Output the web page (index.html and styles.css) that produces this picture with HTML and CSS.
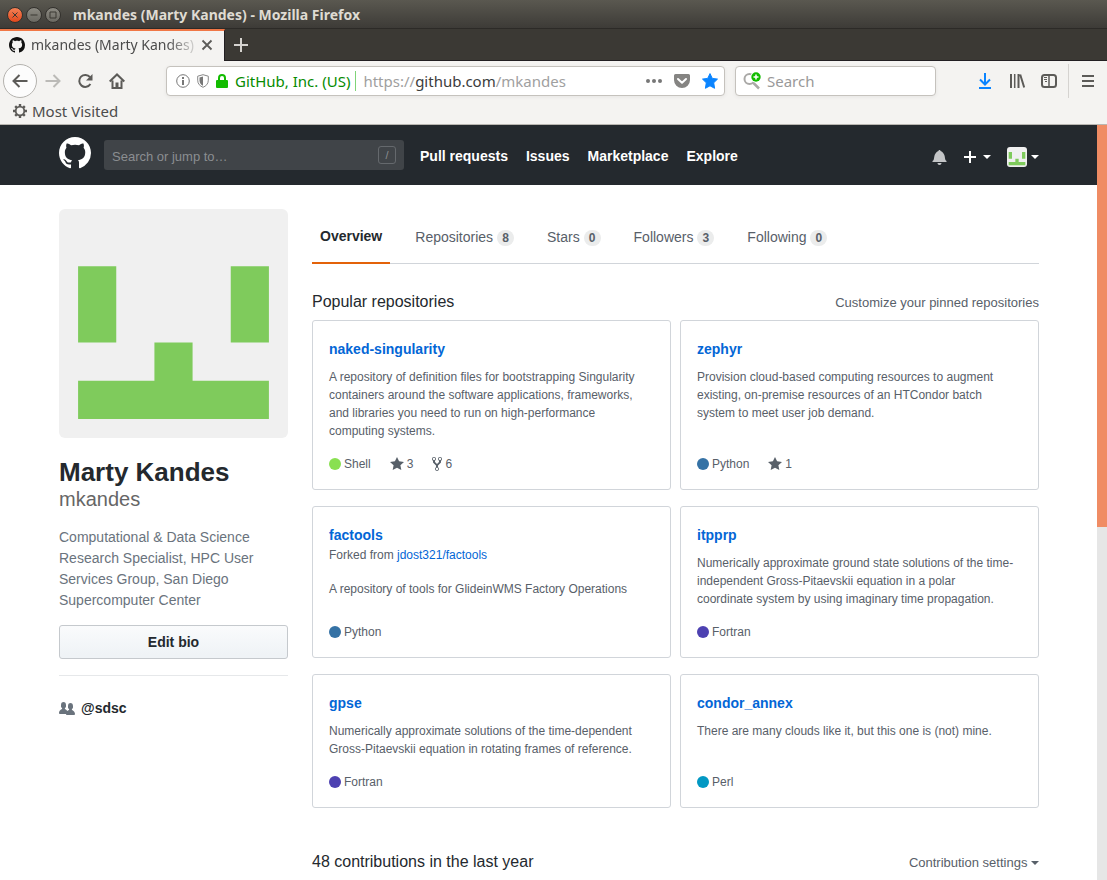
FILE: index.html
```html
<!DOCTYPE html>
<html lang="en">
<head>
<meta charset="utf-8">
<title>mkandes (Marty Kandes)</title>
<link rel="stylesheet" href="styles.css">
</head>
<body>
<svg class="sprite" aria-hidden="true">
  <symbol id="mark" viewBox="0 0 16 16"><path fill-rule="evenodd" d="M8 0C3.58 0 0 3.58 0 8c0 3.54 2.29 6.53 5.47 7.59.4.07.55-.17.55-.38 0-.19-.01-.82-.01-1.49-2.01.37-2.53-.49-2.69-.94-.09-.23-.48-.94-.82-1.13-.28-.15-.68-.52-.01-.53.63-.01 1.08.58 1.23.82.72 1.21 1.87.87 2.33.66.07-.52.28-.87.51-1.07-1.78-.2-3.64-.89-3.64-3.95 0-.87.31-1.59.82-2.15-.08-.2-.36-1.02.08-2.12 0 0 .67-.21 2.2.82.64-.18 1.32-.27 2-.27.68 0 1.36.09 2 .27 1.53-1.04 2.2-.82 2.2-.82.44 1.1.16 1.92.08 2.12.51.56.82 1.27.82 2.15 0 3.07-1.87 3.75-3.65 3.95.29.25.54.73.54 1.48 0 1.07-.01 1.93-.01 2.2 0 .21.15.46.55.38A8.013 8.013 0 0 0 16 8c0-4.42-3.58-8-8-8z"/></symbol>
  <symbol id="star" viewBox="0 0 14 16"><path d="M14 6l-4.9-.64L7 1 4.9 5.36 0 6l3.6 3.26L2.67 14 7 11.67 11.33 14l-.93-4.74z"/></symbol>
  <symbol id="identicon" viewBox="0 0 420 420"><path fill="#f0f0f0" d="M0 0h420v420H0z"/><path fill="#7fcb5c" d="M35 105h70v140H35zM315 105h70v140h-70zM175 245h70v70h140v70H35v-70h140z"/></symbol>
</svg>

<div class="titlebar">
  <button class="win win-close" aria-label="Close window"><svg width="8" height="8" viewBox="0 0 8 8"><path d="M1.500 1.500l5 5M6.500 1.500l-5 5"/></svg></button>
  <button class="win" aria-label="Minimize"><svg width="8" height="8" viewBox="0 0 8 8"><path d="M0.500 4h7"/></svg></button>
  <button class="win" aria-label="Maximize"><svg width="8" height="8" viewBox="0 0 8 8"><path d="M1 1h6v6H1z"/></svg></button>
  <span class="window-title">mkandes (Marty Kandes) - Mozilla Firefox</span>
</div>

<div class="tabbar">
  <div class="tab">
    <svg class="favicon" width="16" height="16"><use href="#mark"/></svg>
    <span class="tab-label">mkandes (Marty Kandes)</span>
    <button class="plain" aria-label="Close tab"><svg width="12" height="12" viewBox="0 0 12 12"><path d="M1.500 1.500l9 9M10.500 1.500l-9 9" stroke="#5c5b58" stroke-width="1.800"/></svg></button>
  </div>
  <button class="plain new-tab" aria-label="New tab"><svg width="14" height="14" viewBox="0 0 14 14"><path d="M7 0v14M0 7h14" stroke="#d5d3cf" stroke-width="2"/></svg></button>
</div>

<div class="toolbar">
  <div class="nav-buttons">
    <button class="plain back" aria-label="Back"><svg width="16" height="16" viewBox="0 0 16 16"><path d="M15.500 8H1.500M7.500 2L1.500 8l6 6" fill="none" stroke="#5c5b58" stroke-width="2"/></svg></button>
    <button class="plain" aria-label="Forward"><svg width="16" height="16" viewBox="0 0 16 16"><path d="M.5 8h14M8.500 2l6 6-6 6" fill="none" stroke="#bbbab7" stroke-width="2"/></svg></button>
    <button class="plain" aria-label="Reload"><svg width="16" height="16" viewBox="0 0 16 16"><path d="M13 4.200A6 6 0 1 0 13.400 11" fill="none" stroke="#5c5b58" stroke-width="2"/><path d="M15.500 1v6.500H9z" fill="#5c5b58"/></svg></button>
    <button class="plain" aria-label="Home"><svg width="16" height="16" viewBox="0 0 16 16"><path d="M.7 8.500L8 1.500l7.300 7M3.500 7.500V15h9V7.500" fill="none" stroke="#5c5b58" stroke-width="2"/><path d="M6.500 9.500h3V15h-3z" fill="#5c5b58"/></svg></button>
  </div>
  <div class="field urlbar">
    <svg width="14" height="14" viewBox="0 0 14 14"><circle cx="7" cy="7" r="6.300" fill="none" stroke="#777"/><path d="M6 3h2v2H6zM6 6h2v5H6z" fill="#777"/></svg>
    <svg width="12" height="14" viewBox="0 0 12 14"><path d="M6 .7l5.300 1.500v4C11.300 10 9 12 6 13.300 3 12 .7 10 .7 6.200v-4z" fill="none" stroke="#888"/><path d="M6 2.500L2.500 3.500V6.500C2.500 9 4 10.800 6 11.800z" fill="#777"/></svg>
    <svg width="12" height="14" viewBox="0 0 12 14"><path d="M3 7V4a3 3 0 0 1 6 0v3" fill="none" stroke="#12bc00" stroke-width="2"/><rect y="6" width="12" height="8" rx="1" fill="#12bc00"/></svg>
    <span class="identity">GitHub, Inc. (US)</span>
    <div class="url" role="textbox" contenteditable="true" spellcheck="false" aria-label="Address">https://<span class="domain">github.com</span>/mkandes</div>
    <svg width="16" height="4" viewBox="0 0 16 4" fill="#777"><circle cx="2" cy="2" r="2"/><circle cx="8" cy="2" r="2"/><circle cx="14" cy="2" r="2"/></svg>
    <svg class="pocket" width="16" height="14" viewBox="0 0 16 14"><path d="M1.500 0h13A1.500 1.500 0 0 1 16 1.500V6A8 8 0 0 1 0 6V1.500A1.500 1.500 0 0 1 1.500 0z" fill="#858482"/><path d="M4 5l4 3.700L12 5" fill="none" stroke="#fff" stroke-width="2" stroke-linecap="round" stroke-linejoin="round"/></svg>
    <svg width="16" height="16" viewBox="0 0 16 16"><path d="M8 .6l2.300 4.800 5.200.7-3.800 3.700.9 5.500L8 12.800l-4.600 2.500.9-5.500L.5 6.100l5.200-.7z" fill="#0a84ff" stroke="#0a84ff" stroke-linejoin="round"/></svg>
  </div>
  <label class="field searchbar">
    <svg width="18" height="18" viewBox="0 0 18 18"><circle cx="6.500" cy="7" r="5" fill="none" stroke="#aaa9a7" stroke-width="2"/><path d="M10 10.500l6 6" stroke="#aaa9a7" stroke-width="2.500"/><circle cx="13" cy="5" r="5.500" fill="#fff"/><circle cx="13" cy="5" r="4.700" fill="#12bc00"/><path d="M13 2.500v5M10.500 5h5" stroke="#fff" stroke-width="1.500"/></svg>
    <input type="text" placeholder="Search" aria-label="Search the web">
  </label>
  <div class="tool-buttons">
    <button class="plain" aria-label="Downloads"><svg width="16" height="16" viewBox="0 0 16 16"><path d="M8 0v11M3 6.500l5 5 5-5M2 15h12" fill="none" stroke="#0a84ff" stroke-width="2"/></svg></button>
    <button class="plain" aria-label="Library"><svg width="16" height="16" viewBox="0 0 16 16"><path d="M2 1v14M9.500 1v14M11.200 1.500l4 13" fill="none" stroke="#5c5b58" stroke-width="2"/><path d="M5.700 1v14" stroke="#5c5b58" stroke-width="1.500"/></svg></button>
    <button class="plain" aria-label="Sidebars"><svg width="16" height="16" viewBox="0 0 16 16"><rect x="1" y="2" width="14" height="12" rx="2.500" fill="none" stroke="#5c5b58" stroke-width="2"/><path d="M8 2v12" stroke="#5c5b58" stroke-width="1.500"/><path d="M3 4.500h3M3 6.500h3M4 8.500h2" stroke="#5c5b58"/></svg></button>
    <span class="separator"></span>
    <button class="plain" aria-label="Open menu"><svg width="12" height="12" viewBox="0 0 12 12"><path d="M0 1h12M0 6h12M0 11h12" stroke="#5c5b58" stroke-width="2"/></svg></button>
  </div>
</div>

<div class="bookmarks">
  <button class="plain bookmark"><svg width="16" height="16" viewBox="0 0 16 16" fill="none" stroke="#5c5b58"><circle cx="8" cy="8" r="4.300" stroke-width="1.800"/><path d="M8 1v2.500M8 12.500V15M1 8h2.500M12.500 8H15M3.200 3.200L5 5M11 11l1.800 1.800M12.800 3.200L11 5M5 11l-1.800 1.800" stroke-width="2.400"/></svg>Most Visited</button>
</div>

<div class="viewport">
  <div class="page">
    <header class="header">
      <div class="container header-row">
        <a href="#" class="logo" aria-label="Homepage"><svg width="32" height="32"><use href="#mark"/></svg></a>
        <label class="jump"><input type="text" placeholder="Search or jump to…" aria-label="Search or jump to"><kbd>/</kbd></label>
        <nav class="main-nav">
          <a href="#">Pull requests</a><a href="#">Issues</a><a href="#">Marketplace</a><a href="#">Explore</a>
        </nav>
        <div class="user-nav">
          <button class="plain" aria-label="Notifications"><svg width="15" height="16" viewBox="0 0 14 16" fill="#c3c5c7"><path d="M14 12v1H0v-1l.73-.58c.77-.77.81-2.550 1.190-4.420C2.690 3.230 6 2 6 2c0-.55.45-1 1-1s1 .45 1 1c0 0 3.390 1.230 4.160 5 .38 1.880.42 3.660 1.190 4.420l.66.580H14zm-7 4c1.110 0 2-.89 2-2H5c0 1.110.89 2 2 2z"/></svg></button>
          <button class="plain menu" aria-label="Create new"><svg width="14" height="14" viewBox="0 0 14 14"><path d="M7 1v12M1 7h12" stroke="#fff" stroke-width="2"/></svg><span class="caret"></span></button>
          <button class="plain menu profile-menu" aria-label="View profile"><svg class="avatar-small" width="20" height="20"><use href="#identicon"/></svg><span class="caret"></span></button>
        </div>
      </div>
    </header>

    <main class="container profile">
      <aside class="sidebar">
        <svg class="avatar" viewBox="0 0 420 420" role="img" aria-label="mkandes"><use href="#identicon"/></svg>
        <h1><span class="fullname">Marty Kandes</span><span class="login">mkandes</span></h1>
        <p class="bio">Computational &amp; Data Science Research Specialist, HPC User Services Group, San Diego Supercomputer Center</p>
        <button class="edit">Edit bio</button>
        <div class="org">
          <svg width="16" height="16" viewBox="0 0 16 16" fill="#6a737d"><path d="M16 12.999c0 .439-.45 1-1 1H7.995c-.539 0-.994-.447-.995-.999H1c-.54 0-1-.561-1-1 0-2.634 3-4 3-4s.229-.409 0-1c-.841-.621-1.058-.59-1-3 .058-2.419 1.367-3 2.500-3s2.442.58 2.500 3c.058 2.410-.159 2.379-1 3-.229.59 0 1 0 1s1.549.711 2.420 2.088C9.196 9.369 10 8.999 10 8.999s.229-.409 0-1c-.841-.62-1.058-.59-1-3 .058-2.419 1.367-3 2.500-3s2.437.581 2.495 3c.059 2.410-.158 2.380-1 3-.229.59 0 1 0 1s3.005 1.366 3.005 4"/></svg>
          <a href="#">@sdsc</a>
        </div>
      </aside>

      <div class="content">
        <nav class="tabs">
          <a href="#" class="selected">Overview</a>
          <a href="#">Repositories <span class="count">8</span></a>
          <a href="#">Stars <span class="count">0</span></a>
          <a href="#">Followers <span class="count">3</span></a>
          <a href="#">Following <span class="count">0</span></a>
        </nav>

        <div class="section-head">
          <h2>Popular repositories</h2>
          <button class="plain quiet">Customize your pinned repositories</button>
        </div>

        <div class="repos">
          <article class="repo">
            <h3><a href="#">naked-singularity</a></h3>
            <p class="desc">A repository of definition files for bootstrapping Singularity containers around the software applications, frameworks, and libraries you need to run on high-performance<br>computing systems.</p>
            <div class="meta"><span class="lang"><i class="dot shell"></i>Shell</span><a href="#" class="stat"><svg width="14" height="16"><use href="#star"/></svg>3</a><a href="#" class="stat"><svg width="10" height="16" viewBox="0 0 10 16"><path d="M8 1a1.993 1.993 0 0 0-1 3.720V6L5 8 3 6V4.720A1.993 1.993 0 0 0 2 1a1.993 1.993 0 0 0-1 3.720V6.500l3 3v1.780A1.993 1.993 0 0 0 5 15a1.993 1.993 0 0 0 1-3.720V9.500l3-3V4.720A1.993 1.993 0 0 0 8 1zM2 4.200C1.340 4.200.8 3.650.8 3c0-.65.55-1.200 1.200-1.200.65 0 1.200.55 1.200 1.200 0 .65-.55 1.200-1.200 1.200zm3 10c-.66 0-1.200-.55-1.200-1.200 0-.65.55-1.200 1.200-1.200.65 0 1.200.55 1.200 1.200 0 .65-.55 1.200-1.200 1.200zm3-10c-.66 0-1.200-.55-1.200-1.200 0-.65.55-1.200 1.200-1.200.65 0 1.200.55 1.200 1.200 0 .65-.55 1.200-1.200 1.200z"/></svg>6</a></div>
          </article>
          <article class="repo">
            <h3><a href="#">zephyr</a></h3>
            <p class="desc">Provision cloud-based computing resources to augment existing, on-premise resources of an HTCondor batch system to meet user job demand.</p>
            <div class="meta"><span class="lang"><i class="dot python"></i>Python</span><a href="#" class="stat"><svg width="14" height="16"><use href="#star"/></svg>1</a></div>
          </article>
          <article class="repo">
            <h3><a href="#">factools</a></h3>
            <p class="fork">Forked from <a href="#">jdost321/factools</a></p>
            <p class="desc">A repository of tools for GlideinWMS Factory Operations</p>
            <div class="meta"><span class="lang"><i class="dot python"></i>Python</span></div>
          </article>
          <article class="repo">
            <h3><a href="#">itpprp</a></h3>
            <p class="desc">Numerically approximate ground state solutions of the time-independent Gross-Pitaevskii equation in a polar<br>coordinate system by using imaginary time propagation.</p>
            <div class="meta"><span class="lang"><i class="dot fortran"></i>Fortran</span></div>
          </article>
          <article class="repo">
            <h3><a href="#">gpse</a></h3>
            <p class="desc">Numerically approximate solutions of the time-dependent Gross-Pitaevskii equation in rotating frames of reference.</p>
            <div class="meta"><span class="lang"><i class="dot fortran"></i>Fortran</span></div>
          </article>
          <article class="repo">
            <h3><a href="#">condor_annex</a></h3>
            <p class="desc">There are many clouds like it, but this one is (not) mine.</p>
            <div class="meta"><span class="lang"><i class="dot perl"></i>Perl</span></div>
          </article>
        </div>

        <div class="section-head contributions">
          <h2>48 contributions in the last year</h2>
          <button class="plain quiet">Contribution settings <span class="caret"></span></button>
        </div>
      </div>
    </main>
  </div>
  <div class="scrollbar"><div class="thumb"></div></div>
</div>
</body>
</html>
```
FILE: styles.css
```css
* { box-sizing: border-box; }
html, body { height: 100%; }
body {
  margin: 0;
  display: flex;
  flex-direction: column;
  overflow: hidden;
  background: #fff;
  color: #24292e;
  font: 14px/21px "Liberation Sans", Arial, sans-serif;
}
h1, h2, h3, p { margin: 0; }
a { color: inherit; text-decoration: none; }
svg { display: block; flex: none; }
input, button { font: inherit; }
.sprite { position: absolute; width: 0; height: 0; }
.plain { padding: 0; border: 0; background: none; color: inherit; }

/* Window frame */
.titlebar, .tabbar, .toolbar, .bookmarks { flex: none; font: 15px/20px "Noto Sans", sans-serif; }
.titlebar {
  display: flex;
  align-items: center;
  gap: 3px;
  height: 29px;
  padding: 1px 0 0 7px;
  background: linear-gradient(#5a5850, #3d3b37);
  border-bottom: 1px solid #2c2a27;
}
.win {
  display: flex;
  align-items: center;
  justify-content: center;
  width: 16px;
  height: 16px;
  padding: 0;
  border: 1px solid #33312d;
  border-radius: 50%;
  background: linear-gradient(#8c8a82, #6b6962);
}
.win svg { fill: none; stroke: #3a3833; stroke-width: 1; }
.win-close { background: linear-gradient(#f58256, #e2481c); }
.window-title { padding-left: 9px; color: #dfdbd2; font-size: 14px; font-weight: 700; }
.tabbar { display: flex; height: 32px; background: #3b3934; box-shadow: inset 0 -1px #221f22; }
.tab {
  display: flex;
  align-items: center;
  width: 225px;
  padding: 0 11px 2px 9px;
  background: #f4f3f1;
  border-top: 2px solid #f07746;
  border-right: 1px solid #221f22;
  color: #4c4c4c;
  font-size: 14px;
}
.favicon { margin-right: 6px; color: #111; }
.tab-label {
  flex: 1;
  white-space: nowrap;
  -webkit-mask-image: linear-gradient(90deg, #000 80%, transparent);
  mask-image: linear-gradient(90deg, #000 80%, transparent);
}
.new-tab { padding: 0 9px; }
.toolbar { display: flex; align-items: center; height: 40px; padding: 0 13px 0 3px; background: #f4f3f1; color: #4c4c4c; }
.nav-buttons { display: flex; align-items: center; gap: 16px; margin-right: 41px; }
.back {
  display: flex;
  align-items: center;
  justify-content: center;
  width: 34px;
  height: 34px;
  margin-right: -8px;
  border: 1px solid #b4b2ae;
  border-radius: 50%;
  background: #fcfcfc;
}
.field {
  display: flex;
  align-items: center;
  height: 30px;
  border: 1px solid #c5c2bd;
  border-radius: 4px;
  background: #fff;
  box-shadow: 0 1px 4px rgba(0, 0, 0, .06);
}
.urlbar { flex: 1; gap: 7px; min-width: 0; padding: 0 6px 0 9px; }
.identity { padding-right: 5px; border-right: 1px solid #7fd478; color: #058b00; white-space: nowrap; }
.url { flex: 1; min-width: 0; overflow: hidden; color: #a0a0a0; white-space: nowrap; }
.domain { color: #3c3c3c; }
.pocket { margin: 0 5px; }
.searchbar { width: 201px; margin-left: 10px; padding-left: 7px; gap: 6px; }
.searchbar input { flex: 1; min-width: 0; padding: 0; border: 0; outline: 0; background: none; }
.searchbar input::placeholder { color: #999; opacity: 1; }
.tool-buttons { display: flex; align-items: center; gap: 16px; margin-left: 41px; }
.separator { width: 1px; height: 34px; margin: 0 -3px 0 -5px; background: #d5d3d0; }
.bookmarks { height: 24px; padding: 0 12px; background: #f4f3f1; border-bottom: 1px solid #b9b6b1; color: #4c4c4c; }
.bookmark { display: flex; align-items: center; gap: 4px; }

/* Scrolling area */
.viewport { display: flex; flex: 1; min-height: 0; }
.page { flex: 1; min-width: 0; overflow: hidden; }
.scrollbar { width: 10px; background: #e6e6e6; }
.thumb { height: 53.3%; background: #f08c64; }
.container { width: 100%; max-width: 981px; margin: 0 auto; padding-left: 1px; }

/* Site header */
.header { padding: 12px 0; background: #24292e; color: #fff; }
.header-row { display: flex; align-items: center; height: 36px; }
.logo { align-self: flex-start; margin-right: 13px; }
.logo svg, .favicon { fill: currentColor; }
.jump {
  display: flex;
  align-items: center;
  width: 300px;
  height: 30px;
  padding: 0 8px;
  border-radius: 3px;
  background: #404448;
  font-size: 13px;
}
.jump input { flex: 1; min-width: 0; padding: 2px 0 0; border: 0; outline: 0; background: none; color: #fff; }
.jump input::placeholder { color: #8b8e91; opacity: 1; }
.jump kbd {
  width: 18px;
  height: 18px;
  border: 1px solid #65696d;
  border-radius: 3px;
  color: #8b8e91;
  font: 11px/16px "Liberation Sans", sans-serif;
  text-align: center;
}
.main-nav { display: flex; gap: 18px; margin-left: 16px; padding-top: 2px; font-weight: 700; }
.user-nav { display: flex; align-items: center; gap: 16px; margin-left: auto; padding-top: 4px; }
.menu { display: flex; align-items: center; gap: 6px; }
.profile-menu { gap: 4px; }
.avatar-small { border-radius: 3px; }
.caret { display: inline-block; border: 4px solid transparent; border-top-color: currentColor; border-bottom: 0; vertical-align: middle; }

/* Profile */
.profile { display: grid; grid-template-columns: 229px minmax(0, 1fr); gap: 24px; padding-top: 24px; }
.avatar { width: 100%; border-radius: 6px; }
h1 { padding: 19px 0 16px; }
.fullname, .login { display: block; }
.fullname { font-size: 26px; line-height: 30px; }
.login { color: #666; font-size: 20px; font-weight: 300; line-height: 24px; }
.bio { margin-bottom: 14px; color: #6a737d; }
.edit {
  width: 100%;
  height: 34px;
  border: 1px solid #c5c9cd;
  border-radius: 3px;
  background: linear-gradient(#fafbfc, #eff3f6 90%);
  color: #24292e;
  font-weight: 700;
}
.org { display: flex; align-items: center; gap: 6px; margin-top: 16px; padding-top: 22px; border-top: 1px solid #e6e8ea; font-weight: 700; }
.tabs { display: flex; gap: 17px; border-bottom: 1px solid #d1d5da; }
.tabs a { margin-bottom: -1px; padding: 18px 8px 14px; border-bottom: 2px solid transparent; color: #586069; }
.tabs .selected { padding: 17px 8px 15px; border-color: #e36209; color: #24292e; font-weight: 700; }
.count {
  display: inline-block;
  min-width: 17px;
  padding: 2px 5px;
  border-radius: 20px;
  background: #ebecec;
  color: #586069;
  font-size: 12px;
  font-weight: 700;
  line-height: 12px;
  text-align: center;
}
.section-head { display: flex; align-items: center; justify-content: space-between; margin: 26px 0 6px; }
.section-head h2 { font-size: 16px; font-weight: 400; line-height: 24px; }
.quiet { color: #586069; font-size: 13px; }
.repos { display: grid; grid-template-columns: repeat(2, minmax(0, 1fr)); gap: 16px 9px; }
.repo { display: flex; flex-direction: column; padding: 17px 16px 16px; border: 1px solid #d1d5da; border-radius: 3px; color: #586069; font-size: 12px; line-height: 18px; }
.repo h3 { font-size: 14px; line-height: 22px; }
.repo a { color: #0366d6; }
.repo .stat { display: flex; align-items: center; gap: 3px; color: #586069; }
.repo svg { fill: #586069; }
.desc { margin: 8px 0 15px; }
.fork + .desc { margin-top: 16px; }
.meta { display: flex; gap: 19px; margin-top: auto; }
.fork ~ .meta { padding-top: 10px; }
.lang { display: flex; align-items: center; gap: 3px; }
.dot { width: 12px; height: 12px; border-radius: 50%; }
.shell { background: #89e051; }
.python { background: #3572a5; }
.fortran { background: #4d41b1; }
.perl { background: #0298c3; }
.contributions { margin-top: 42px; }
```
